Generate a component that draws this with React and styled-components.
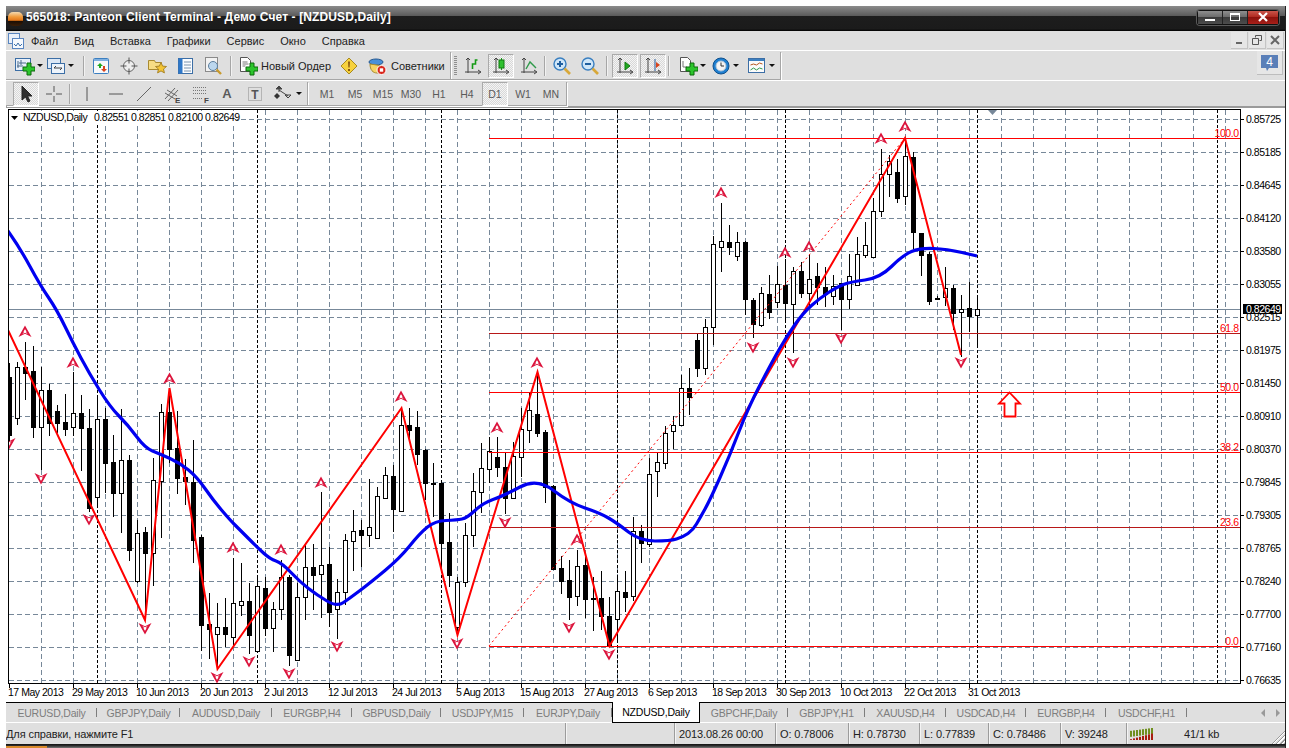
import React from "react";
import styled, {createGlobalStyle} from "styled-components";

const GlobalStyle = createGlobalStyle`
    html, body {
        margin: 0;
        padding: 0;
        background: #fff;
        overflow: hidden;
    }
    * { box-sizing: border-box; }
`;

// page coords are used straight in the chart, see viewBox below
const CANDLES = [
    [363,377,435,446,0],[362,367,418,425,1],[342,367,373,400,0],[346,371,427,438,0],[367,390,427,470,1],
    [384,390,423,436,0],[405,411,423,433,0],[394,422,429,436,0],[372,413,427,436,1],[395,413,428,471,0],
    [409,428,508,512,0],[397,419,497,507,1],[408,419,463,493,0],[435,462,493,517,0],[409,460,493,533,1],
    [455,460,550,561,0],[520,533,581,583,1],[527,532,553,620,0],[458,480,553,586,1],[404,412,481,538,1],
    [388,412,449,463,0],[411,448,478,494,0],[459,477,481,505,0],[440,482,540,563,0],[535,537,625,651,0],
    [593,624,629,659,0],[603,627,634,670,1],[598,627,634,647,0],[558,603,637,647,1],[563,601,605,616,1],
    [583,601,635,654,0],[577,586,651,652,1],[577,588,628,636,0],[602,609,628,652,1],[560,577,609,620,1],
    [575,577,655,666,0],[583,597,660,660,1],[545,567,597,620,1],[544,567,575,610,0],[492,565,574,618,1],
    [547,564,612,627,0],[579,592,609,639,1],[534,540,592,605,1],[510,531,541,571,1],[520,530,535,567,0],
    [479,527,535,547,1],[487,496,538,538,1],[467,475,498,498,1],[465,476,509,532,0],[408,425,511,511,1],
    [408,425,430,440,0],[411,427,454,465,0],[449,450,483,500,0],[463,483,484,517,0],[483,483,543,570,0],
    [513,542,575,587,0],[577,582,627,633,1],[523,535,582,587,1],[473,491,535,547,1],[443,468,492,513,1],
    [437,451,469,483,1],[437,457,467,477,0],[453,467,498,514,0],[442,456,498,498,1],[408,429,457,477,1],
    [393,410,430,443,1],[373,414,433,437,0],[430,432,487,503,0],[485,486,569,570,0],[556,568,581,594,0],
    [560,580,597,620,0],[550,566,596,606,1],[557,565,599,618,0],[577,598,599,631,0],[571,598,616,630,0],
    [597,616,645,645,0],[575,591,619,643,1],[571,592,597,612,0],[517,531,596,601,1],[525,531,543,563,0],
    [458,474,544,547,1],[453,462,471,497,1],[426,433,463,469,1],[416,425,431,449,1],[375,388,425,426,1],
    [368,388,397,415,0],[333,340,368,377,0],[319,327,368,375,1],[236,244,327,345,1],[203,241,247,272,1],
    [225,242,247,255,0],[232,242,256,261,1],[241,242,299,315,0],[298,300,324,338,0],[287,293,325,327,1],
    [275,294,312,319,0],[266,284,302,308,1],[259,285,303,323,0],[267,271,304,353,1],[262,271,293,298,0],
    [255,279,293,307,1],[263,276,287,305,0],[267,287,294,307,0],[275,286,296,305,1],[283,283,299,330,0],
    [254,276,299,309,1],[237,254,285,286,1],[222,245,255,258,1],[198,211,257,258,1],[149,174,211,217,1],
    [155,161,174,197,1],[159,172,198,203,0],[142,156,196,205,1],[152,157,232,249,0],[233,233,255,276,0],
    [252,254,301,305,0],[296,298,299,300,0],[267,288,297,306,1],[285,288,313,330,0],[295,309,312,357,1],
    [282,308,316,332,0],[295,309,315,345,1],
];

const ZIGZAG = "8,330 145,620 169.5,388 217.5,669 401.5,408 457.5,635 537.5,372 609.5,646 905,138 961,355";

const MA = [[8,231],[20,248],[40,285],[57,310],[73,343],[89,373],[110,407],[128,425],[145,448],[160,454],[180,463],[197,477],[213,500],[230,520],[240,530],[257,547],[270,559],[282,563],[300,582],[317,595],[337,607],[350,598],[370,583],[400,558],[420,533],[435,521],[457,520],[467,518],[483,503],[503,496],[537,478],[570,503],[600,513],[617,523],[640,541],[670,541],[683,537],[693,530],[700,518],[710,500],[730,455],[748,408],[773,360],[787,336],[803,313],[820,298],[837,287],[850,282],[880,278],[903,255],[920,248],[947,249],[977,256]];

// rounds the corners between the read off points
const smooth = (pts) => {
    let d = `M${pts[0][0]} ${pts[0][1]}`;
    for (let i = 1; i < pts.length - 1; i++) {
        const mx = (pts[i][0] + pts[i + 1][0]) / 2;
        const my = (pts[i][1] + pts[i + 1][1]) / 2;
        d += `Q${pts[i][0]} ${pts[i][1]} ${mx} ${my}`;
    }
    const last = pts[pts.length - 1];
    return `${d}L${last[0]} ${last[1]}`;
};

const UP_MARKS = [[25,332],[73,363],[169.5,379],[321,483],[233,548],[281,550],[401,397],[497,428],[537,363],[577,540],[721,193],[785,253],[809,247],[881,139],[905,127]];
const DOWN_MARKS = [[9,443],[41,478],[89,519],[145,628],[217,677],[249,661],[289,673],[337,646],[457,643],[505,522],[569,627],[609,654],[753,347],[793,362],[841,338],[961,362]];

const PRICES = ["0.85725","0.85185","0.84645","0.84120","0.83580","0.83055","0.82515","0.81975","0.81450","0.80910","0.80370","0.79845","0.79305","0.78765","0.78240","0.77700","0.77160","0.76635"];
const DATES = ["17 May 2013","29 May 2013","10 Jun 2013","20 Jun 2013","2 Jul 2013","12 Jul 2013","24 Jul 2013","5 Aug 2013","15 Aug 2013","27 Aug 2013","6 Sep 2013","18 Sep 2013","30 Sep 2013","10 Oct 2013","22 Oct 2013","31 Oct 2013"];
const FIBS = [[138.5,"100.0","#f00"],[333.5,"61.8","#b81818"],[392.5,"50.0","#f00"],[452.5,"38.2","#f00"],[527.5,"23.6","#b81818"],[646.5,"0.0","#f00"]];
const SEPS = [97.5,257.5,441.5,617.5,785.5,977.5,1217.5];

const TABS = [
    ["EURUSD,Daily",91],["GBPJPY,Daily",83],["AUDUSD,Daily",92],["EURGBP,H4",80],["GBPUSD,Daily",89],["USDJPY,M15",83],["EURJPY,Daily",88],
    ["NZDUSD,Daily",88,true],["GBPCHF,Daily",88],["GBPJPY,H1",77],["XAUUSD,H4",81],["USDCAD,H4",80],["EURGBP,H4",80],["USDCHF,H1",81],
];

const MENU = ["Файл","Вид","Вставка","Графики","Сервис","Окно","Справка"];
const PERIODS = ["M1","M5","M15","M30","H1","H4","D1","W1","MN"];

const Window = styled.div`
    margin: 6px 0 0 6px;
    width: 1280px;
    height: 742px;
    display: flex;
    flex-direction: column;
    background: #dfdfdf;
    border-right: 1px solid #222;
    font-family: "Liberation Sans", Arial, sans-serif;
    overflow: hidden;
`;

const TitleBar = styled.div`
    height: 25px;
    flex: none;
    display: flex;
    align-items: center;
    padding: 0 6px 3px 2px;
    background: linear-gradient(#8b8b8b 0, #5c5c5c 38%, #1d1d1d 39%, #1b1b1b 92%, #000 100%);
`;

const Logo = styled.div`
    width: 15px;
    height: 14px;
    margin: 3px 3px 0 0;
    border-radius: 5px;
    background: linear-gradient(#f3d9b0 0, #f09a3a 35%, #e2761a 60%, #1a0d04 64%, #3a1d06 100%);
`;

const TitleText = styled.div`
    color: #fff;
    font-size: 12px;
    font-weight: 700;
    letter-spacing: 0.12px;
    white-space: nowrap;
    flex: 1;
`;

const CaptionGroup = styled.div`
    display: flex;
    height: 15px;
    border: 1px solid #111;
    border-radius: 3px;
    box-shadow: 0 0 0 1px #5a5a5a;
`;

const CaptionBtn = styled.div`
    width: ${p => p.$w}px;
    display: flex;
    align-items: center;
    justify-content: center;
    border-right: 1px solid #222;
    background: ${p => p.$close
        ? "linear-gradient(#c9554a 0, #b02a20 45%, #8c120c 50%, #a8201a 100%)"
        : "linear-gradient(#8e8e8e 0, #6c6c6c 45%, #3b3b3b 50%, #4d4d4d 100%)"};
    &:last-child { border-right: none; }
`;

const MenuBar = styled.div`
    height: 19px;
    flex: none;
    display: flex;
    align-items: center;
    background: #dfdfdf;
    padding-left: 2px;
`;

const MenuItem = styled.div`
    font-size: 11px;
    color: #222;
    padding: 0 8px;
`;

const MenuItems = styled.div`
    display: flex;
    margin-left: -1px;
`;

const MdiGroup = styled.div`
    margin-left: auto;
    display: flex;
    gap: 1px;
    padding-right: 1px;
`;

const MdiBtn = styled.div`
    width: 17px;
    height: 17px;
    display: flex;
    align-items: center;
    justify-content: center;
    background: #e6e6e6;
    border-right: 1px solid #c4c4c4;
    border-bottom: 1px solid #c4c4c4;
`;

const ToolRow = styled.div`
    height: ${p => p.$h}px;
    flex: none;
    display: flex;
    align-items: stretch;
    background: #dfdfdf;
    border-top: 1px solid #fff;
    ${p => p.$last && "border-bottom: 2px solid #9a9a9a;"}
`;

const Toolbar = styled.div`
    display: flex;
    align-items: center;
    width: ${p => p.$w}px;
    padding-left: ${p => p.$pad}px;
    border-right: 1px solid #a6a6a6;
    border-bottom: 1px solid #a6a6a6;
    box-shadow: 1px 1px 0 #fff;
    margin-top: 1px;
`;

const Handle = styled.div`
    width: 3px;
    height: 20px;
    margin-right: ${p => p.$mr}px;
    background: repeating-linear-gradient(#8f8f8f 0 1px, #dfdfdf 1px 2px);
`;

const ToolBtn = styled.div`
    width: ${p => p.$w || 26}px;
    height: 24px;
    flex: none;
    margin-right: ${p => p.$mr ?? 2}px;
    display: flex;
    align-items: center;
    justify-content: ${p => p.$start ? "flex-start" : "center"};
    padding-left: ${p => p.$pl || 0}px;
    gap: ${p => p.$gap || 0}px;
    font-size: ${p => p.$fs || 11}px;
    color: ${p => p.$muted ? "#5a5a5a" : "#222"};
    white-space: nowrap;
    ${p => p.$on && `
        border: 1px solid #fff;
        border-color: #aaa #fff #fff #aaa;
        background-color: #efefef;
        background-image: repeating-conic-gradient(#d8d8d8 0 25%, #f4f4f4 0 50%);
        background-size: 2px 2px;
    `}
`;

const Caret = styled.span`
    width: 0;
    height: 0;
    margin-left: 2px;
    border-left: 3px solid transparent;
    border-right: 3px solid transparent;
    border-top: 3px solid #111;
`;

const Sep = styled.div`
    width: 2px;
    height: 20px;
    flex: none;
    margin: 0 ${p => p.$r ?? 3}px 0 ${p => p.$l ?? 3}px;
    background: #a6a6a6;
    border-right: 1px solid #f2f2f2;
`;

const NotifyBtn = styled.div`
    margin-left: auto;
    margin-right: 2px;
    width: 26px;
    height: 24px;
    display: flex;
    align-items: center;
    justify-content: center;
    border-right: 1px solid #bdbdbd;
    border-bottom: 1px solid #bdbdbd;
    background: #e6e6e6;
`;

const ChartWrap = styled.div`
    height: 595px;
    flex: none;
    background: #fff;
    border-bottom: 1px solid #000;
`;

const ChartSvg = styled.svg`
    display: block;
    font-family: "Liberation Sans", Arial, sans-serif;
    text {
        font-size: 10.5px;
        letter-spacing: -0.48px;
    }
`;

const TabBar = styled.div`
    height: 20px;
    flex: none;
    display: flex;
    align-items: stretch;
    background: #dfdfdf;
    border-bottom: 1px solid #fff;
    position: relative;
`;

const Tab = styled.div`
    width: ${p => p.$w}px;
    flex: none;
    display: flex;
    align-items: center;
    justify-content: center;
    font-size: 10.5px;
    letter-spacing: -0.2px;
    color: ${p => p.$active ? "#000" : "#7d7d7d"};
    ${p => p.$active
        ? "background: #fff; border: 1px solid #000; border-top: none; margin: -1px 0 -1px 0;"
        : `position: relative;
           &::after {
               content: "";
               position: absolute;
               right: 0; top: 5px; bottom: 5px;
               width: 1px;
               background: #7d7d7d;
           }`}
`;

const TabNav = styled.div`
    margin-left: auto;
    display: flex;
    align-items: center;
    gap: 11px;
    padding-right: 5px;
`;

const NavArrow = styled.span`
    width: 0;
    height: 0;
    border-top: 4px solid transparent;
    border-bottom: 4px solid transparent;
    ${p => p.$left ? "border-right: 4px solid #999;" : "border-left: 4px solid #999;"}
`;

const StatusBar = styled.div`
    height: 21px;
    flex: none;
    display: flex;
    align-items: stretch;
    background: #dfdfdf;
    font-size: 11px;
    color: #222;
    position: relative;
`;

const Pane = styled.div`
    width: ${p => p.$w}px;
    flex: none;
    display: flex;
    align-items: center;
    padding-left: ${p => p.$pl ?? 5}px;
    white-space: nowrap;
    letter-spacing: -0.1px;
    ${p => p.$first ? "" : "box-shadow: inset 1px 0 0 #9c9c9c, inset 2px 0 0 #f4f4f4;"}
`;

const PaneNote = styled.span`
    margin-left: 29px;
`;

const Grip = styled.div`
    position: absolute;
    right: 0;
    bottom: 0;
    width: 14px;
    height: 14px;
    background: repeating-linear-gradient(135deg, transparent 0 1px, #9a9a9a 1px 2px, #fff 2px 3px);
    clip-path: polygon(100% 0, 100% 100%, 0 100%);
`;

const BottomEdge = styled.div`
    height: 4px;
    flex: none;
    background: linear-gradient(#111 0, #2a2a2a 40%, #777 100%);
    display: flex;
    align-items: flex-end;
`;

const TaskStripe = styled.div`
    width: 41px;
    height: 2px;
    background: #d98a2b;
`;

const IconSvg = styled.svg`
    flex: none;
`;

const Svg = ({children, size = 20, w, h}) => (
    <IconSvg width={w || size} height={h || size} viewBox={`0 0 ${w || size} ${h || size}`} fill="none">{children}</IconSvg>
);

const Plus = ({x = 12, y = 7}) => (
    <path d={`M${x} ${y}h4v4h4v4h-4v4h-4v-4h-4v-4h4z`} fill="#2cc52c" stroke="#0b6b0b" strokeWidth="1" />
);

const NewChartIcon = () => (
    <Svg>
        <rect x="0.5" y="2.5" width="15" height="12" fill="#e8f0fa" stroke="#3c6ea5" />
        <path d="M3 5v7M2 10h6M6 4v5M4 7h7" stroke="#4a6a8a" />
        <Plus />
    </Svg>
);

const ProfilesIcon = () => (
    <Svg>
        <rect x="1.5" y="2.5" width="13" height="10" fill="#dce8f6" stroke="#3c6ea5" />
        <rect x="5.5" y="7.5" width="13" height="10" fill="#eef4fb" stroke="#3c6ea5" />
        <path d="M8 12h8M8 12l2-2M16 12l-2 2" stroke="#444" />
    </Svg>
);

const MarketIcon = () => (
    <Svg>
        <rect x="2.5" y="2.5" width="15" height="15" rx="1" fill="#f6f8fb" stroke="#3c7fc0" />
        <rect x="3" y="3" width="14" height="2" fill="#7fb0e0" />
        <path d="M6 10l3-3 3 3H10v2H8v-2z" fill="#1fa81f" />
        <path d="M10 13l3 3 3-3h-2v-3h-2v3z" fill="#d9441c" />
    </Svg>
);

const CrossIcon = () => (
    <Svg>
        <circle cx="10" cy="10" r="5.5" stroke="#666" fill="#eee" />
        <path d="M10 1.5v6M10 12.5v6M1.5 10h6M12.5 10h6" stroke="#555" />
    </Svg>
);

const FolderStarIcon = () => (
    <Svg>
        <path d="M1.5 4.5h6l1 2h6v7h-13z" fill="#f6dc84" stroke="#a88a30" />
        <path d="M14 6.5l1.6 3.6 3.9.4-3 2.5.9 3.9-3.4-2-3.4 2 .9-3.9-3-2.5 3.9-.4z" fill="#f4c534" stroke="#a8842a" />
    </Svg>
);

const NavigatorIcon = () => (
    <Svg>
        <rect x="3.5" y="2.5" width="14" height="15" fill="#fbfdff" stroke="#3c6ea5" />
        <rect x="3.5" y="2.5" width="4" height="15" fill="#2f78c9" />
        <path d="M9 6h7M9 9h7M9 12h7M9 15h7" stroke="#7a93ad" />
    </Svg>
);

const TesterIcon = () => (
    <Svg>
        <rect x="2.5" y="1.5" width="12" height="14" fill="#f2f2f2" stroke="#8a8a8a" />
        <circle cx="10" cy="10" r="4.5" fill="#bcd7ee" stroke="#5d7f9e" />
        <path d="M13.5 13.5l4.5 4.5" stroke="#c89a2c" strokeWidth="2.4" />
    </Svg>
);

const OrderIcon = () => (
    <Svg>
        <path d="M2.5 1.5h7l3 3v11h-10z" fill="#fff" stroke="#555" />
        <path d="M4.5 6h5M4.5 8h6M4.5 10h3" stroke="#777" />
        <Plus />
    </Svg>
);

const WarnIcon = () => (
    <Svg>
        <path d="M10 2l8 8-8 8-8-8z" fill="#f7d23e" stroke="#a88a20" />
        <path d="M9 5.5h2l-.4 6h-1.2zM9 13h2v2H9z" fill="#8a5a10" />
    </Svg>
);

const ExpertIcon = () => (
    <Svg>
        <ellipse cx="9" cy="6" rx="7" ry="3" fill="#4a90d9" stroke="#27598f" />
        <path d="M3 8c0 6 3 9 7 9s6-3 6-7z" fill="#f6d364" stroke="#a88a30" />
        <circle cx="14.5" cy="14" r="4.5" fill="#d8261c" stroke="#fff" />
        <rect x="12.8" y="12.3" width="3.4" height="3.4" fill="#fff" />
    </Svg>
);

const Axes = () => <path d="M5 2v15M2 16h15M15 14l3 2-3 2M3 4l2-2 2 2" stroke="#444" />;

const BarsIcon = () => (
    <Svg>
        <Axes />
        <path d="M9.5 13V8h3V4h2" stroke="#159a15" strokeWidth="1.6" />
    </Svg>
);

const CandleIcon = () => (
    <Svg>
        <Axes />
        <path d="M10.5 2v12" stroke="#159a15" />
        <rect x="8" y="4" width="5" height="8" fill="#2ec02e" stroke="#0f7a0f" />
    </Svg>
);

const LineIcon = () => (
    <Svg>
        <Axes />
        <path d="M7 13l4-7 6 6" stroke="#2f9a4a" strokeWidth="1.4" />
    </Svg>
);

const ZoomIcon = ({plus}) => (
    <Svg>
        <circle cx="8" cy="8" r="6" fill="#cfe6f8" stroke="#3a7fc0" strokeWidth="1.4" />
        <path d={plus ? "M5 8h6M8 5v6" : "M5 8h6"} stroke="#1f5f9f" strokeWidth="2" />
        <path d="M12.5 12.5l5.5 5.5" stroke="#d8a83a" strokeWidth="2.6" />
    </Svg>
);

const ScrollIcon = () => (
    <Svg>
        <Axes />
        <path d="M10 6l5 4-5 4z" fill="#1fa81f" stroke="#0f7a0f" />
    </Svg>
);

const ShiftIcon = () => (
    <Svg>
        <Axes />
        <path d="M12 3v12" stroke="#2a5a9a" />
        <path d="M17 9l-4-3v6z" fill="#d9441c" />
    </Svg>
);

const IndicatorAddIcon = () => (
    <Svg>
        <path d="M2.5 1.5h7l3 3v11h-10z" fill="#fff" stroke="#555" />
        <path d="M5 5v6h4" stroke="#777" />
        <Plus />
    </Svg>
);

const ClockIcon = () => (
    <Svg>
        <circle cx="10" cy="10" r="8" fill="#1f7fd0" stroke="#10508c" />
        <circle cx="10" cy="10" r="5" fill="#f4f4f4" stroke="#b0c4d6" />
        <path d="M10 6.5V10h3" stroke="#333" />
    </Svg>
);

const TemplateIcon = () => (
    <Svg>
        <rect x="1.5" y="2.5" width="16" height="14" fill="#fbfbfb" stroke="#3c6ea5" />
        <rect x="2" y="3" width="15" height="2" fill="#3c7fc0" />
        <path d="M3.5 9l3-1 3 1 3-2 3 1" stroke="#b5551c" />
        <path d="M3.5 14l3-2 3 2 3-2 3 1" stroke="#2f9a4a" />
    </Svg>
);

const ArrowCursor = () => (
    <Svg>
        <path d="M6 2v14l3.5-3 2.5 5 2-1-2.5-5H16z" fill="#2f2f2f" stroke="#222" />
    </Svg>
);

const CrossLines = () => (
    <Svg>
        <path d="M10 2v6M10 12v6M2 10h6M12 10h6" stroke="#555" />
    </Svg>
);

const VLine = () => <Svg><path d="M10 3v14" stroke="#555" /></Svg>;
const HLine = () => <Svg><path d="M3 10h14" stroke="#555" /></Svg>;
const TrendLine = () => <Svg><path d="M3 17L17 3" stroke="#666" /></Svg>;

const ChannelIcon = () => (
    <Svg>
        <path d="M3 15L13 4M6 17L16 6M3 9l10 6M5 6l10 6" stroke="#666" />
        <text x="13" y="19" fontSize="8" fill="#444" fontFamily="Liberation Sans" fontWeight="700">E</text>
    </Svg>
);

const FiboIcon = () => (
    <Svg>
        <path d="M2 3.5h13M2 6.5h13M2 9.5h13M2 14.5h9" stroke="#777" strokeDasharray="1 1" />
        <text x="13" y="19" fontSize="8" fill="#444" fontFamily="Liberation Sans" fontWeight="700">F</text>
    </Svg>
);

const TextBoxIcon = () => (
    <Svg>
        <rect x="3.5" y="3.5" width="13" height="13" stroke="#888" strokeDasharray="1 1" />
        <text x="10" y="14.5" fontSize="12" fill="#555" textAnchor="middle" fontFamily="Liberation Sans" fontWeight="700">T</text>
    </Svg>
);

const ArrowsIcon = () => (
    <Svg>
        <path d="M5 2l3 3H2zM5 5v3" fill="#444" stroke="#444" />
        <path d="M14 14l-3-3h6zM5 6l9 6" stroke="#444" />
        <path d="M3 9l3 3-3 3-3-3z" fill="#333" />
    </Svg>
);

const MenuIcon = () => (
    <Svg size={16}>
        <rect x="0.5" y="0.5" width="11" height="10" fill="#e9f0fa" stroke="#5a86c0" />
        <rect x="4.5" y="5.5" width="11" height="10" fill="#f6f9fd" stroke="#5a86c0" />
        <path d="M6 11l2 2 2-3 2 3 2-2" stroke="#3a6ea8" />
    </Svg>
);

const SignalIcon = () => (
    <Svg w={26} h={14}>
        {[0,1,2,3,4,5,6,7].map(i => (
            <g key={i}>
                <rect x={i * 3 + 1} y={1 + (7 - i) * 0.4} width="2" height={6} fill="#6f8f1f" />
                <rect x={i * 3 + 1} y={13 - (i + 1) * 0.8} width="2" height={(i + 1) * 0.8} fill="#a81c10" />
            </g>
        ))}
    </Svg>
);

const Mark = ({x, y, down}) => (
    <g transform={`translate(${x} ${y})${down ? " rotate(180)" : ""}`}>
        <path d="M0-6.5L6.5 5 0 1.8-6.5 5z" fill="#dc143c" />
        <path d="M0-3.2L2.6 2.2 0 .8-2.6 2.2z" fill="#fff" />
        <path d="M0-5v3M-2.6 1.4L-1 .6M2.6 1.4L1 .6" stroke="#dc143c" strokeWidth=".8" />
    </g>
);

const Chart = () => (
    <ChartWrap>
        <ChartSvg width="1279" height="594" viewBox="6 108 1279 594">
            <defs>
                <clipPath id="plot"><rect x="9" y="110" width="1231" height="573" /></clipPath>
            </defs>
            <g shapeRendering="crispEdges" clipPath="url(#plot)">
                {PRICES.map((p, i) => (
                    <line key={p} x1="9" x2="1240" y1={119.5 + 33 * i} y2={119.5 + 33 * i} stroke="#778899" strokeDasharray="5 3" />
                ))}
                {Array.from({length: 38}, (_, i) => (
                    <line key={i} x1={41.5 + 32 * i} x2={41.5 + 32 * i} y1="110" y2="683" stroke="#778899" strokeDasharray="5 3" />
                ))}
                {SEPS.map(x => <line key={x} x1={x} x2={x} y1="110" y2="683" stroke="#000" strokeDasharray="3 2" />)}
                <rect x="9" y="111" width="228" height="12" fill="#fff" />
                <line x1="9" x2="1240" y1="309.5" y2="309.5" stroke="#778899" />
            </g>
            <g shapeRendering="crispEdges" clipPath="url(#plot)">
                {CANDLES.map(([hi, top, bot, lo, hollow], i) => {
                    const x = 9.5 + 8 * i;
                    return (
                        <g key={i}>
                            <line x1={x} x2={x} y1={hi} y2={lo} stroke="#000" />
                            <rect x={x - 2} y={top + 0.5} width="4" height={Math.max(bot - top, 1)} fill={hollow ? "#fff" : "#000"} stroke="#000" />
                        </g>
                    );
                })}
            </g>
            <g clipPath="url(#plot)">
                <line x1="489" y1="646" x2="905" y2="138" stroke="#f00" strokeDasharray="2 3" />
                {FIBS.map(([y, label, color]) => (
                    <line key={label} x1="489" x2="1240" y1={y} y2={y} stroke={color} shapeRendering="crispEdges" />
                ))}
                <polyline points={ZIGZAG} fill="none" stroke="#f00" strokeWidth="2" strokeLinejoin="miter" />
                <path d={smooth(MA)} fill="none" stroke="#0000f0" strokeWidth="3.2" strokeLinejoin="round" />
                {UP_MARKS.map(([x, y]) => <Mark key={`u${x}`} x={x} y={y} />)}
                {DOWN_MARKS.map(([x, y]) => <Mark key={`d${x}`} x={x} y={y} down />)}
                <path d="M1009.5 392.5l10.5 11h-4.5v13h-11v-13H999z" fill="#fff" stroke="#f00" strokeWidth="1.8" />
                <path d="M988 110h9l-4.5 5z" fill="#778899" />
            </g>
            {FIBS.map(([y, label]) => (
                <text key={label} x="1238.5" y={y - 2} fill="#f00" textAnchor="end">{label}</text>
            ))}
            <rect x="8.5" y="109.5" width="1232" height="574" fill="none" stroke="#000" shapeRendering="crispEdges" />
            <path d="M11 116h7l-3.5 4z" fill="#000" />
            <text x="23" y="121" fill="#000">NZDUSD,Daily</text>
            <text x="94" y="121" fill="#000">0.82551 0.82851 0.82100 0.82649</text>
            {PRICES.map((p, i) => (
                <g key={p}>
                    <line x1="1241" x2="1244" y1={119.5 + 33 * i} y2={119.5 + 33 * i} stroke="#000" shapeRendering="crispEdges" />
                    <text x="1246" y={122.5 + 33 * i} fill="#000">{p}</text>
                </g>
            ))}
            <rect x="1243" y="304" width="39" height="10" fill="#000" />
            <text x="1246" y="312.5" fill="#fff">0.82649</text>
            {DATES.map((d, i) => (
                <g key={d}>
                    <line x1={9.5 + 64 * i} x2={9.5 + 64 * i} y1="684" y2="688" stroke="#000" shapeRendering="crispEdges" />
                    <text x={8 + 64 * i} y="696" fill="#000">{d}</text>
                </g>
            ))}
        </ChartSvg>
    </ChartWrap>
);

const App = () => {
    return (
        <React.Fragment>
            <GlobalStyle />
            <Window>
                <TitleBar>
                    <Logo />
                    <TitleText>565018: Panteon Client Terminal - Демо Счет - [NZDUSD,Daily]</TitleText>
                    <CaptionGroup>
                        <CaptionBtn $w={25}><Svg w={12} h={10}><rect x="1" y="7" width="10" height="2" fill="#fff" /></Svg></CaptionBtn>
                        <CaptionBtn $w={25}><Svg w={12} h={10}><rect x="1.5" y="1.5" width="9" height="7" stroke="#fff" /><rect x="1" y="1" width="10" height="2" fill="#fff" /></Svg></CaptionBtn>
                        <CaptionBtn $w={30} $close><Svg w={12} h={10}><path d="M2 1l8 8M10 1l-8 8" stroke="#fff" strokeWidth="2.2" /></Svg></CaptionBtn>
                    </CaptionGroup>
                </TitleBar>
                <MenuBar>
                    <MenuIcon />
                    <MenuItems>
                        {MENU.map(m => <MenuItem key={m}>{m}</MenuItem>)}
                    </MenuItems>
                    <MdiGroup>
                        <MdiBtn><Svg w={12} h={12}><rect x="3" y="8" width="6" height="2" fill="#666" /></Svg></MdiBtn>
                        <MdiBtn><Svg w={12} h={12}><path d="M4.5 3.5v-2h6v5h-2M1.5 4.5h6v6h-6z" stroke="#555" /></Svg></MdiBtn>
                        <MdiBtn><Svg w={12} h={12}><path d="M2 2l8 8M10 2l-8 8" stroke="#666" strokeWidth="2" /></Svg></MdiBtn>
                    </MdiGroup>
                </MenuBar>
                <ToolRow $h={30}>
                    <Toolbar $w={445} $pad={7}>
                        <ToolBtn $w={32} $mr={0}><NewChartIcon /><Caret /></ToolBtn>
                        <ToolBtn $w={30} $mr={0}><ProfilesIcon /><Caret /></ToolBtn>
                        <Sep $l={8} $r={3} />
                        <ToolBtn><MarketIcon /></ToolBtn>
                        <ToolBtn><CrossIcon /></ToolBtn>
                        <ToolBtn><FolderStarIcon /></ToolBtn>
                        <ToolBtn><NavigatorIcon /></ToolBtn>
                        <ToolBtn $mr={0}><TesterIcon /></ToolBtn>
                        <Sep $l={4} $r={3} />
                        <ToolBtn $w={100} $start $pl={3} $gap={3} $mr={1}><OrderIcon />Новый Ордер</ToolBtn>
                        <ToolBtn $mr={2}><WarnIcon /></ToolBtn>
                        <ToolBtn $w={85} $start $pl={3} $gap={4} $mr={0}><ExpertIcon />Советники</ToolBtn>
                    </Toolbar>
                    <Toolbar $w={330} $pad={3}>
                        <Handle $mr={3} />
                        <ToolBtn><BarsIcon /></ToolBtn>
                        <ToolBtn $on><CandleIcon /></ToolBtn>
                        <ToolBtn $mr={0}><LineIcon /></ToolBtn>
                        <Sep $l={2} $r={3} />
                        <ToolBtn><ZoomIcon plus /></ToolBtn>
                        <ToolBtn $mr={0}><ZoomIcon /></ToolBtn>
                        <Sep $l={3} $r={4} />
                        <ToolBtn $on><ScrollIcon /></ToolBtn>
                        <ToolBtn $on $mr={0}><ShiftIcon /></ToolBtn>
                        <Sep $l={2} $r={6} />
                        <ToolBtn $w={32} $mr={1}><IndicatorAddIcon /><Caret /></ToolBtn>
                        <ToolBtn $w={32} $mr={3}><ClockIcon /><Caret /></ToolBtn>
                        <ToolBtn $w={34} $mr={0}><TemplateIcon /><Caret /></ToolBtn>
                    </Toolbar>
                    <NotifyBtn>
                        <Svg w={20} h={20}>
                            <path d="M1 2h17v13H9l-2 3-1-3H1z" fill="#5a7fb8" />
                            <text x="9.5" y="12.5" fontSize="12" fill="#fff" textAnchor="middle" fontFamily="Liberation Sans">4</text>
                        </Svg>
                    </NotifyBtn>
                </ToolRow>
                <ToolRow $h={28} $last>
                    <Toolbar $w={302} $pad={7}>
                        <ToolBtn $on><ArrowCursor /></ToolBtn>
                        <ToolBtn $mr={0}><CrossLines /></ToolBtn>
                        <Sep $l={2} $r={3} />
                        <ToolBtn $mr={3}><VLine /></ToolBtn>
                        <ToolBtn><HLine /></ToolBtn>
                        <ToolBtn><TrendLine /></ToolBtn>
                        <ToolBtn $mr={3}><ChannelIcon /></ToolBtn>
                        <ToolBtn $mr={0}><FiboIcon /></ToolBtn>
                        <ToolBtn $fs={13} $muted><b>A</b></ToolBtn>
                        <ToolBtn $mr={4}><TextBoxIcon /></ToolBtn>
                        <ToolBtn $w={32} $mr={0}><ArrowsIcon /><Caret /></ToolBtn>
                    </Toolbar>
                    <Toolbar $w={259} $pad={3}>
                        <Handle $mr={3} />
                        {PERIODS.map(p => <ToolBtn key={p} $fs={10.5} $muted $on={p === "D1"}>{p}</ToolBtn>)}
                    </Toolbar>
                </ToolRow>
                <Chart />
                <TabBar>
                    {TABS.map(([name, w, active]) => <Tab key={name + w} $w={w} $active={active}>{name}</Tab>)}
                    <TabNav><NavArrow $left /><NavArrow /></TabNav>
                </TabBar>
                <StatusBar>
                    <Pane $w={559} $first $pl={0}>Для справки, нажмите F1</Pane>
                    <Pane $w={109} />
                    <Pane $w={101}>2013.08.26 00:00</Pane>
                    <Pane $w={73}>O: 0.78006</Pane>
                    <Pane $w={71}>H: 0.78730</Pane>
                    <Pane $w={69}>L: 0.77839</Pane>
                    <Pane $w={72}>C: 0.78486</Pane>
                    <Pane $w={66}>V: 39248</Pane>
                    <Pane $w={140} $pl={3}><SignalIcon /><PaneNote>41/1 kb</PaneNote></Pane>
                    <Grip />
                </StatusBar>
                <BottomEdge><TaskStripe /></BottomEdge>
            </Window>
        </React.Fragment>
    );
};

export default App;
